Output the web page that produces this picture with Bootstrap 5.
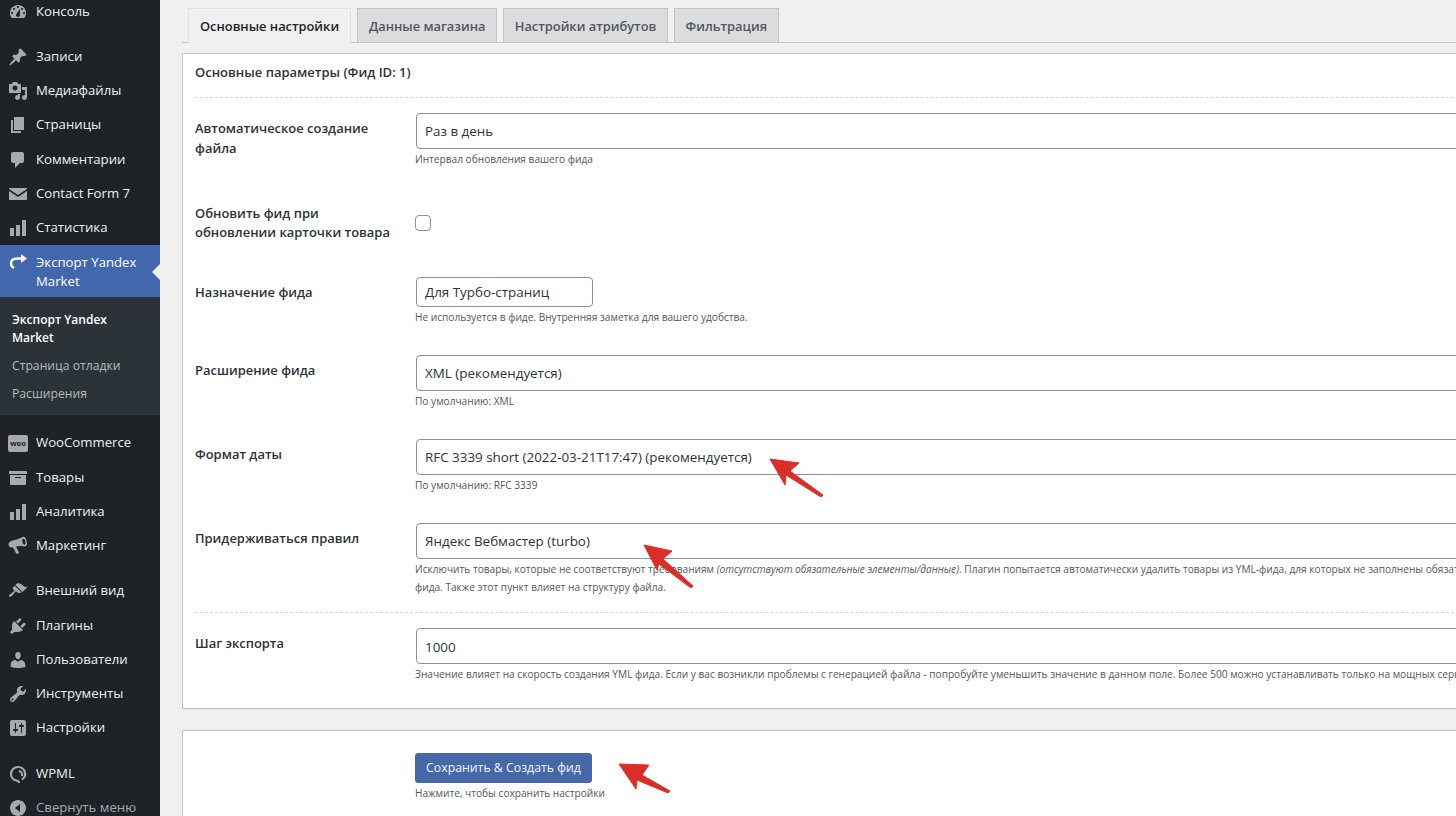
<!DOCTYPE html>
<html lang="ru"><head><meta charset="utf-8"><title>Экспорт Yandex Market</title>
<link href="https://cdn.jsdelivr.net/npm/bootstrap@5.3.0/dist/css/bootstrap.min.css" rel="stylesheet">
<style>
html,body{height:816px;overflow:hidden;background:#f0f0f1;font-family:"Open Sans","Noto Sans",sans-serif;color:#2c3338;}
.shell{width:1456px;height:816px;overflow:hidden;position:relative;}
.wpbar{width:160px;flex:none;background:#1d2327;height:816px;overflow:hidden;color:#f0f0f1;font-size:13.2px;}
.wpbar-inner{margin-top:-6px;}
.mrow{height:34.25px;padding-top:1px;}
.mrow svg,.mact svg{width:20px;height:20px;flex:none;margin-left:8px;margin-right:8px;fill:#a7aaad;}
.gap11{margin-top:11px;}
.mact{height:52px;background:#4267ac;color:#fff;position:relative;line-height:19px;padding-top:8px;}
.mact svg{fill:#fff;margin-top:-1px;}
.mact::after{content:"";position:absolute;right:0;top:19px;border:8px solid transparent;border-right-color:#f0f0f1;border-left-width:0;}
.msub{background:#2c3338;padding:14px 12px 12px;font-size:12.2px;line-height:18px;color:#b4b9be;}
.msub>div+div{margin-top:10px;}
.msub .cur{color:#fff;font-weight:600;font-size:12px;}
.wooico{width:20px;height:17px;margin:0 8px;background:#a7aaad;border-radius:2px;color:#1d2327;font-size:7.5px;font-weight:700;line-height:16px;text-align:center;flex:none;}
.muted-row{color:#a7aaad;}
.wpmain{width:1296px;flex:none;overflow:hidden;padding-left:22px;}
.wide{width:1500px;}
.tabbar{margin-top:8px;padding-left:6px;height:35px;border-bottom:1px solid #c3c4c7;flex-wrap:nowrap;}
.tabbar .nav-link{height:35px;margin:0 6.3px 0 0;padding:0 10.5px;line-height:34px;font-size:12.85px;font-weight:600;background:#dcdcde;color:#50575e;border:1px solid #c3c4c7;border-radius:0;white-space:nowrap;}
.tabbar .nav-link.active{background:#f0f0f1;color:#1d2327;border-bottom-color:#f0f0f1;padding:0 11px;}
.panel{border:1px solid #c3c4c7;border-radius:0;background:#fff;margin-top:10px;padding:0 12px 25px;box-shadow:0 1px 1px rgba(0,0,0,.04);}
.panel-ttl{height:44px;line-height:36px;font-size:13px;font-weight:600;color:#2c3338;border-bottom:1px dashed #d5d5d7;margin-bottom:15px;}
.frow{display:flex;margin-bottom:29px;}
.frow.first{margin-bottom:30px;}
.frow.last{margin-bottom:0;}
.frow.split{margin-bottom:15px;padding-bottom:16px;border-bottom:1px dashed #d5d5d7;}
.lbl{width:221px;flex:none;padding-top:5px;padding-right:24px;font-size:12.95px;line-height:20px;font-weight:600;color:#2c3338;}
.fld{flex:1;min-width:0;}
.fld .form-select,.fld .form-control{height:36px;font-size:13.4px;padding:1px 8px 0;border-color:#8c8f94;border-radius:4px;color:#2c3338;background-color:#fff;box-shadow:none;}
.fld .short{width:177px;height:30px;padding-top:0;}
.hint{margin:1px 0 0 -1px;font-size:10.15px;line-height:18px;color:#50575e;white-space:nowrap;}
.chkrow{height:50px;align-items:center;}
.chkrow .lbl{padding-top:0;line-height:19.5px;}
.chkrow .form-check-input{width:16px;height:16px;margin:0 0 0 -1px;border-color:#8c8f94;border-radius:4px;}
.panel2{margin-top:21px;padding:22px 0 60px 232px;}
.panel2 .hint{margin-left:0;}
.btn.savebtn{height:30px;width:177px;padding:0;font-size:12.3px;font-weight:400;background:#4568a9;border-color:#4568a9;color:#f4f6fb;border-radius:3px;white-space:nowrap;}
.arrows{position:absolute;left:0;top:0;width:1456px;height:816px;pointer-events:none;}
</style></head>
<body>
<div class="shell d-flex">
<aside class="wpbar"><div class="wpbar-inner">
<div class="mrow d-flex align-items-center"><svg viewBox="0 0 20 20"><path fill-rule="evenodd" d="M3.76 16h12.48c1.1-1.37 1.76-3.11 1.76-5 0-4.42-3.58-8-8-8s-8 3.58-8 8c0 1.89.66 3.63 1.76 5zM10 4c.55 0 1 .45 1 1s-.45 1-1 1-1-.45-1-1 .45-1 1-1zM6 6c.55 0 1 .45 1 1s-.45 1-1 1-1-.45-1-1 .45-1 1-1zm8 0c.55 0 1 .45 1 1s-.45 1-1 1-1-.45-1-1 .45-1 1-1zm-5.37 5.55L12 7v6c0 1.1-.9 2-2 2s-2-.9-2-2c0-.57.24-1.08.63-1.45zM4 10c.55 0 1 .45 1 1s-.45 1-1 1-1-.45-1-1 .45-1 1-1zm12 0c.55 0 1 .45 1 1s-.45 1-1 1-1-.45-1-1 .45-1 1-1z"/></svg>Консоль</div>
<div class="mrow d-flex align-items-center gap11"><svg viewBox="0 0 20 20"><path d="M10.44 3.02l1.82-1.82 6.36 6.35-1.83 1.82c-1.05-.68-2.48-.57-3.41.36l-.75.75c-.92.93-1.04 2.35-.35 3.41l-1.83 1.82-2.41-2.41-2.8 2.79c-.42.42-3.38 2.71-3.8 2.29s1.86-3.39 2.28-3.81l2.79-2.79L4.1 9.36l1.83-1.82c1.05.69 2.48.57 3.4-.36l.75-.75c.93-.92 1.05-2.35.36-3.41z"/></svg>Записи</div>
<div class="mrow d-flex align-items-center"><svg viewBox="0 0 20 20"><path fill-rule="evenodd" d="M13 11V4c0-.55-.45-1-1-1h-1.67L9 1H5L3.67 3H2c-.55 0-1 .45-1 1v7c0 .55.45 1 1 1h10c.55 0 1-.45 1-1zM7 4.5c1.38 0 2.5 1.12 2.5 2.5S8.38 9.5 7 9.5 4.5 8.38 4.5 7 5.62 4.5 7 4.5zM14 6h5v10.5c0 1.38-1.12 2.5-2.5 2.5S14 17.88 14 16.5s1.12-2.5 2.5-2.5c.17 0 .34.02.5.05V9h-3V6zm-4 8.05V13h2v3.5c0 1.38-1.12 2.5-2.5 2.5S7 17.88 7 16.5 8.12 14 9.5 14c.17 0 .34.02.5.05z"/></svg>Медиафайлы</div>
<div class="mrow d-flex align-items-center"><svg viewBox="0 0 20 20"><path d="M6 15V2h10v13H6zm-1 1h8v2H3V5h2v11z"/></svg>Страницы</div>
<div class="mrow d-flex align-items-center"><svg viewBox="0 0 20 20"><path d="M5 2h9c1.1 0 2 .9 2 2v7c0 1.1-.9 2-2 2h-2l-5 5v-5H5c-1.1 0-2-.9-2-2V4c0-1.1.9-2 2-2z"/></svg>Комментарии</div>
<div class="mrow d-flex align-items-center"><svg viewBox="0 0 20 20"><path d="M2 4h16c.55 0 1 .45 1 1L10 11 1 5c0-.55.45-1 1-1zM1 7l9 6 9-6v8c0 .55-.45 1-1 1H2c-.55 0-1-.45-1-1z"/></svg>Contact Form 7</div>
<div class="mrow d-flex align-items-center"><svg viewBox="0 0 20 20"><path d="M18 18V2h-4v16h4zm-6 0V7H8v11h4zm-6 0v-8H2v8h4z"/></svg>Статистика</div>
<div class="mact d-flex"><svg viewBox="0 0 20 20"><path fill="none" stroke="#fff" stroke-width="2.400" d="M14 6.500H9.500C5.500 6.500 3 8.500 3 11.500c0 2 1 3.500 3 4.500"/><path d="M13 2l6 4.500-6 4.500z"/></svg><div>Экспорт Yandex<br>Market</div></div>
<div class="msub"><div class="cur">Экспорт Yandex<br>Market</div><div>Страница отладки</div><div>Расширения</div></div>
<div class="mrow d-flex align-items-center gap11"><div class="wooico">woo</div><span>WooCommerce</span></div>
<div class="mrow d-flex align-items-center"><svg viewBox="0 0 20 20"><path fill-rule="evenodd" d="M19 4v2H1V4c0-.55.45-1 1-1h16c.55 0 1 .45 1 1zM2 7h16v9c0 .55-.45 1-1 1H3c-.55 0-1-.45-1-1zm5 2v1h6V9z"/></svg>Товары</div>
<div class="mrow d-flex align-items-center"><svg viewBox="0 0 20 20"><path d="M18 18V2h-4v16h4zm-6 0V7H8v11h4zm-6 0v-8H2v8h4z"/></svg>Аналитика</div>
<div class="mrow d-flex align-items-center"><svg viewBox="0 0 20 20"><g transform="rotate(-12 10 10)"><path fill-rule="evenodd" d="M17 2c1.700 0 2.500 2.300 2.500 5s-.8 5-2.500 5c-3-1.500-6-2-9-2l1.500 6.500c.1.600-.3 1-.8 1H7.500c-.5 0-.8-.3-1-.8L5 10.500C2.800 10.300 1 9 1 7s1.800-3.300 4-3.500c4.500 0 8.500-.5 12-1.500zm-.3 2C15.800 4 15.200 5.300 15.200 7s.6 3 1.500 3 1.500-1.300 1.500-3-.6-3-1.500-3z"/></g></svg>Маркетинг</div>
<div class="mrow d-flex align-items-center gap11"><svg viewBox="0 0 20 20"><path d="M14.480 11.060L7.410 3.990l1.500-1.500c.5-.56 2.300-.47 3.510.32 1.210.8 1.430 1.280 2.910 2.100 1.180.64 2.450 1.260 4.450.85zm-.71.71L6.700 4.700 4.930 6.470c-.39.39-.39 1.020 0 1.410l1.060 1.060c.39.39.39 1.030 0 1.420-.6.6-1.430 1.110-2.210 1.690-.35.26-.7.53-1.010.84C1.430 13.230.4 14.910 1.100 15.600c.7.71 2.380-.32 3.720-1.670.31-.31.58-.66.84-1.010.58-.78 1.090-1.610 1.690-2.210.39-.39 1.020-.39 1.410 0l1.060 1.060c.39.39 1.020.39 1.410 0z"/></svg>Внешний вид</div>
<div class="mrow d-flex align-items-center"><svg viewBox="0 0 20 20"><path d="M13.110 4.360L9.870 7.600 8 5.730l3.240-3.240c.35-.34 1.050-.2 1.560.32.52.51.66 1.210.31 1.550zm-8 1.770l.91-1.120 9.010 9.010-1.190.84c-.71.71-2.630 1.160-3.820 1.160H6.140L4.900 17.260c-.59.59-1.540.59-2.120 0-.59-.58-.59-1.530 0-2.120l1.240-1.240v-3.880c0-1.130.4-3.190 1.090-3.890zm7.260 3.970l3.240-3.240c.34-.35 1.040-.21 1.550.31.52.51.66 1.210.31 1.550l-3.240 3.250z"/></svg>Плагины</div>
<div class="mrow d-flex align-items-center"><svg viewBox="0 0 20 20"><path d="M10 9.250c-2.270 0-2.730-3.440-2.730-3.440C7 4.020 7.820 2 9.970 2c2.160 0 2.980 2.020 2.710 3.810 0 0-.41 3.440-2.680 3.440zm0 2.570L12.720 10c2.390 0 4.520 2.330 4.520 4.530v2.490s-3.650 1.130-7.240 1.130c-3.650 0-7.240-1.130-7.240-1.130v-2.490c0-2.250 1.940-4.480 4.470-4.480z"/></svg>Пользователи</div>
<div class="mrow d-flex align-items-center"><svg viewBox="0 0 20 20"><path fill-rule="evenodd" d="M16.680 9.770c-1.340 1.340-3.300 1.670-4.950.99l-5.410 6.520c-.99.99-2.590.99-3.580 0s-.99-2.590 0-3.570l6.520-5.420c-.68-1.650-.35-3.610.99-4.950 1.280-1.280 3.120-1.620 4.720-1.060l-2.890 2.890 2.820 2.820 2.860-2.870c.53 1.580.18 3.390-1.080 4.650zM3.810 16.210c.4.39 1.040.39 1.430 0 .4-.4.4-1.040 0-1.430-.39-.4-1.030-.4-1.430 0-.39.39-.39 1.030 0 1.430z"/></svg>Инструменты</div>
<div class="mrow d-flex align-items-center"><svg viewBox="0 0 20 20"><path fill-rule="evenodd" d="M18 16V4c0-1.100-.9-2-2-2H4c-1.100 0-2 .9-2 2v12c0 1.100.9 2 2 2h12c1.100 0 2-.9 2-2zM8 11h1c.55 0 1 .45 1 1s-.45 1-1 1H8v1.500c0 .28-.22.5-.5.5s-.5-.22-.5-.5V13H6c-.55 0-1-.45-1-1s.45-1 1-1h1V5.500c0-.28.22-.5.5-.5s.5.22.5.5V11zm5-2h-1c-.55 0-1-.45-1-1s.45-1 1-1h1V5.500c0-.28.22-.5.5-.5s.5.22.5.5V7h1c.55 0 1 .45 1 1s-.45 1-1 1h-1v5.500c0 .28-.22.5-.5.5s-.5-.22-.5-.5V9z"/></svg>Настройки</div>
<div class="mrow d-flex align-items-center gap11"><svg viewBox="0 0 20 20"><path fill="none" stroke="#a7aaad" stroke-width="2.200" d="M14 15.500C16.500 14 17.500 11.500 17 8.800 16.300 5 13 3 10 3 6 3 3 6 3 10c0 3.500 2.500 6 5.500 6.500 2 .3 2.500 1 2.500 2.500M11 7c2 .5 3.500 2.500 3 5"/></svg>WPML</div>
<div class="mrow d-flex align-items-center muted-row"><svg viewBox="0 0 20 20"><path fill-rule="evenodd" d="M18 10c0-4.420-3.580-8-8-8s-8 3.580-8 8 3.580 8 8 8 8-3.580 8-8zm-6-4v8L7 10z"/></svg>Свернуть меню</div>
</div></aside>
<main class="wpmain"><div class="wide">
<ul class="nav nav-tabs tabbar">
<li class="nav-item"><a class="nav-link active" href="#">Основные настройки</a></li>
<li class="nav-item"><a class="nav-link" href="#">Данные магазина</a></li>
<li class="nav-item"><a class="nav-link" href="#">Настройки атрибутов</a></li>
<li class="nav-item"><a class="nav-link" href="#">Фильтрация</a></li>
</ul>
<section class="card panel">
<div class="panel-ttl">Основные параметры (Фид ID: 1)</div>
<div class="frow first"><div class="lbl">Автоматическое создание файла</div><div class="fld"><select class="form-select"><option>Раз в день</option></select><div class="hint">Интервал обновления вашего фида</div></div></div>
<div class="frow chkrow"><div class="lbl">Обновить фид при обновлении карточки товара</div><div class="fld d-flex"><input class="form-check-input" type="checkbox"></div></div>
<div class="frow"><div class="lbl">Назначение фида</div><div class="fld"><input class="form-control short" type="text" value="Для Турбо-страниц"><div class="hint">Не используется в фиде. Внутренняя заметка для вашего удобства.</div></div></div>
<div class="frow"><div class="lbl">Расширение фида</div><div class="fld"><select class="form-select"><option>XML (рекомендуется)</option></select><div class="hint">По умолчанию: XML</div></div></div>
<div class="frow"><div class="lbl">Формат даты</div><div class="fld"><select class="form-select"><option>RFC 3339 short (2022-03-21T17:47) (рекомендуется)</option></select><div class="hint">По умолчанию: RFC 3339</div></div></div>
<div class="frow split"><div class="lbl">Придерживаться правил</div><div class="fld"><select class="form-select"><option>Яндекс Вебмастер (turbo)</option></select><div class="hint">Исключить товары, которые не соответствуют требованиям <em>(отсутствуют обязательные элементы/данные)</em>. Плагин попытается автоматически удалить товары из YML-фида, для которых не заполнены обязательные элементы<br>фида. Также этот пункт влияет на структуру файла.</div></div></div>
<div class="frow last"><div class="lbl">Шаг экспорта</div><div class="fld"><input class="form-control" type="text" value="1000"><div class="hint">Значение влияет на скорость создания YML фида. Если у вас возникли проблемы с генерацией файла - попробуйте уменьшить значение в данном поле. Более 500 можно устанавливать только на мощных серверах</div></div></div>
</section>
<section class="card panel panel2">
<div><button class="btn btn-primary savebtn" type="button">Сохранить &amp; Создать фид</button></div>
<div class="hint">Нажмите, чтобы сохранить настройки</div>
</section>
</div></main>
<svg class="arrows" viewBox="0 0 1456 816" aria-hidden="true">
<g fill="#d92f28" stroke="#d92f28" stroke-width="1">
<path d="M770 459 799 463 790 471 823 495 821 497 786 475 785 485z"/>
<path d="M644 545 672 551 663 559 693 586 691 588 659 564 657 570z"/>
<path d="M619 764 649 765 642 775 670 791 668 793 637 780 636 789z"/>
</g></svg>
</div>
</body></html>
